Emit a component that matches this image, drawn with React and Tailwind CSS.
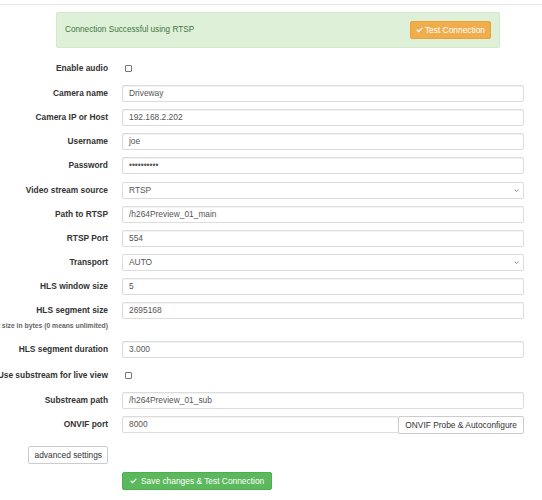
import React from 'react';

const font = { fontFamily: '"Liberation Sans", Arial, sans-serif' };

function Check() {
  return (
    <svg viewBox="0 0 12 10" className="w-[7px] h-[6px] inline-block" fill="currentColor">
      <path d="M0.5 5.4 L2 3.9 L4.4 6.2 L10 0.6 L11.5 2.1 L4.4 9.2 Z" />
    </svg>
  );
}

function Label({ children }) {
  return (
    <div className="flex justify-end items-center whitespace-nowrap font-bold text-[#333] text-[8.4px] h-[17px]">
      {children}
    </div>
  );
}

function TextInput({ value }) {
  return (
    <div className="h-[17px] border border-[#dcdcdc] rounded-[2px] bg-white flex items-center pl-[6px] text-[8.4px] text-[#555] shadow-[inset_0_1px_1px_rgba(0,0,0,0.05)]">
      {value}
    </div>
  );
}

function SelectInput({ value }) {
  return (
    <div className="h-[17px] border border-[#dcdcdc] rounded-[2px] bg-white flex items-center justify-between pl-[6px] pr-[4px] text-[8.4px] text-[#555]">
      <span>{value}</span>
      <svg viewBox="0 0 8 5" className="w-[5px] h-[3px]" fill="none" stroke="#666" strokeWidth="1.3">
        <path d="M1 1 L4 4 L7 1" />
      </svg>
    </div>
  );
}

function Checkbox() {
  return <div className="w-[7px] h-[7px] border border-[#777] rounded-[1px] bg-white ml-[3px]" />;
}

function Row({ label, children, className = 'mb-[7px]' }) {
  return (
    <div className={`grid grid-cols-[108px_1fr] gap-x-[14px] ${className}`}>
      <Label>{label}</Label>
      <div>{children}</div>
    </div>
  );
}

export default function App() {
  return (
    <div className="w-[542px] h-[500px] bg-white overflow-hidden" style={font}>
      <div className="h-[5px] border-b border-[#e6e6e6]" />

      {/* status alert */}
      <div className="mt-[7px] ml-[56px] mr-[42px] h-[36px] bg-[#dff0d8] border border-[#d6e9c6] rounded-[2px] flex items-center justify-between pl-[8px] pr-[8px]">
        <span className="text-[#3c763d] text-[8.2px]">Connection Successful using RTSP</span>
        <button className="h-[18px] px-[5px] bg-[#f0ad4e] border border-[#eea236] rounded-[2px] text-white text-[8.4px] flex items-center gap-[2px]">
          <Check /> Test Connection
        </button>
      </div>

      <div className="pr-[18px] mt-[12px]">
        <Row label="Enable audio" className="mb-[8px]">
          <div className="h-[17px] flex items-center">
            <Checkbox />
          </div>
        </Row>
        <Row label="Camera name">
          <TextInput value="Driveway" />
        </Row>
        <Row label="Camera IP or Host">
          <TextInput value="192.168.2.202" />
        </Row>
        <Row label="Username">
          <TextInput value="joe" />
        </Row>
        <Row label="Password" className="mb-[8px]">
          <TextInput value="••••••••••" />
        </Row>
        <Row label="Video stream source">
          <SelectInput value="RTSP" />
        </Row>
        <Row label="Path to RTSP">
          <TextInput value="/h264Preview_01_main" />
        </Row>
        <Row label="RTSP Port">
          <TextInput value="554" />
        </Row>
        <Row label="Transport">
          <SelectInput value="AUTO" />
        </Row>
        <Row label="HLS window size">
          <TextInput value="5" />
        </Row>

        <div className="grid grid-cols-[108px_1fr] gap-x-[14px] mb-[10px]">
          <div>
            <Label>HLS segment size</Label>
            <div className="flex justify-end whitespace-nowrap text-[6.8px] font-bold text-[#666] mt-[2px] leading-[10px]">
              Maximum segment size in bytes (0 means unlimited)
            </div>
          </div>
          <div>
            <TextInput value="2695168" />
          </div>
        </div>

        <Row label="HLS segment duration">
          <TextInput value="3.000" />
        </Row>
        <div className="grid grid-cols-[108px_1fr] gap-x-[14px] mb-[7px]">
          <div className="flex justify-end items-center whitespace-nowrap font-bold text-[#333] text-[8.4px] h-[20px]">
            Use substream for live view
          </div>
          <div className="h-[20px] flex items-center">
            <Checkbox />
          </div>
        </div>
        <Row label="Substream path">
          <TextInput value="/h264Preview_01_sub" />
        </Row>
        <Row label="ONVIF port" className="mb-[12px]">
          <div className="flex items-start">
            <div className="flex-1">
              <TextInput value="8000" />
            </div>
            <button className="h-[18px] px-[6px] bg-white border border-[#ccc] rounded-[2px] text-[#333] text-[8.4px] whitespace-nowrap -ml-[1px]">
              ONVIF Probe &amp; Autoconfigure
            </button>
          </div>
        </Row>

        <div className="grid grid-cols-[108px_1fr] gap-x-[14px] mb-[8px]">
          <div className="flex justify-end">
            <button className="h-[18px] px-[5px] bg-white border border-[#ccc] rounded-[2px] text-[#333] text-[8.4px] whitespace-nowrap">
              advanced settings
            </button>
          </div>
          <div />
        </div>
        <div className="grid grid-cols-[108px_1fr] gap-x-[14px]">
          <div />
          <div>
            <button className="h-[18px] px-[7px] bg-[#5cb85c] border border-[#4cae4c] rounded-[2px] text-white text-[8.4px] flex items-center gap-[4px] whitespace-nowrap">
              <Check /> Save changes &amp; Test Connection
            </button>
          </div>
        </div>
      </div>
    </div>
  );
}
